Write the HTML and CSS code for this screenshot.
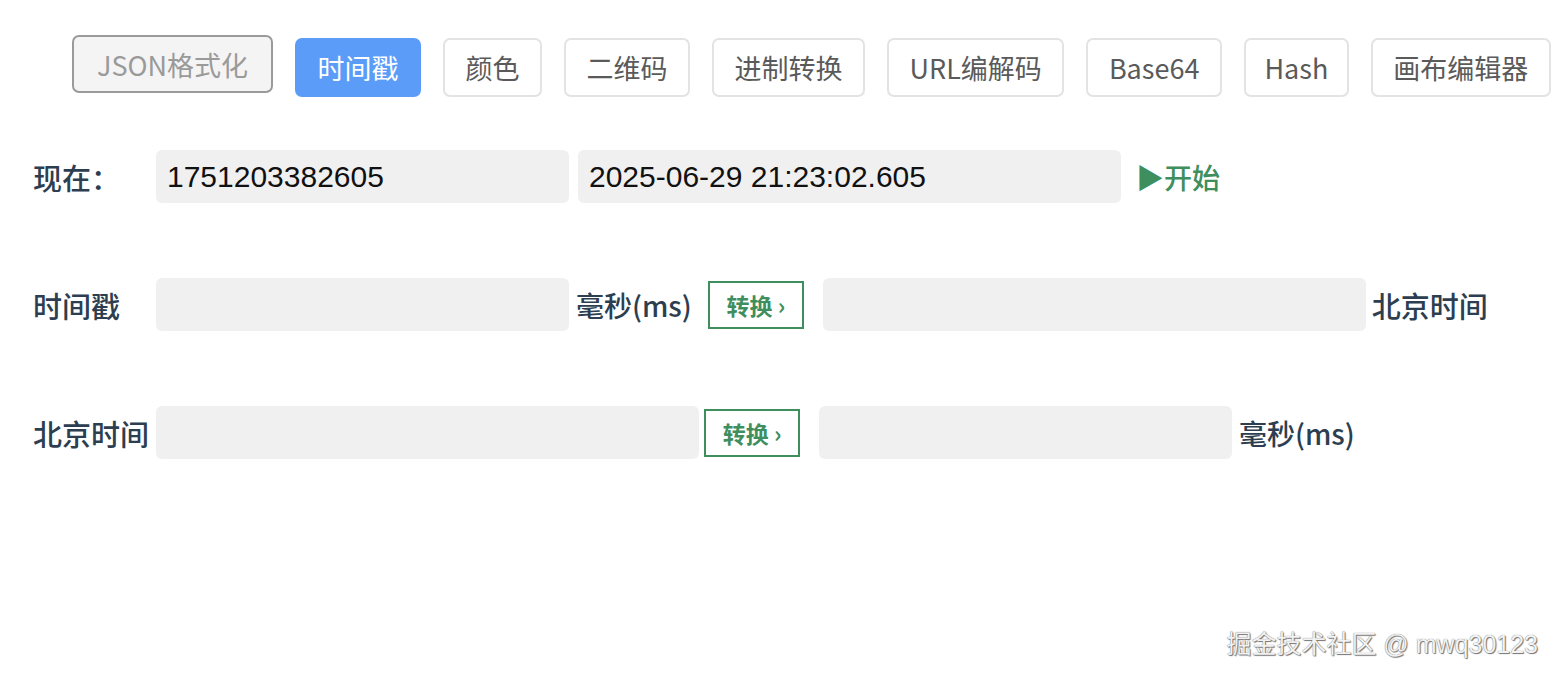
FILE: index.html
```html
<!DOCTYPE html>
<html lang="zh-CN">
<head>
<meta charset="utf-8">
<title>时间戳</title>
<link rel="stylesheet" href="styles.css">
</head>
<body>
<div class="app">
  <nav class="tabs">
    <button class="tab tab-disabled">JSON格式化</button>
    <button class="tab tab-active">时间戳</button>
    <button class="tab">颜色</button>
    <button class="tab">二维码</button>
    <button class="tab">进制转换</button>
    <button class="tab">URL编解码</button>
    <button class="tab">Base64</button>
    <button class="tab tab-narrow">Hash</button>
    <button class="tab">画布编辑器</button>
  </nav>

  <main class="rows">
    <div class="row">
      <span class="label">现在：</span>
      <div class="field field-sm">1751203382605</div>
      <div class="field field-lg gap-9">2025-06-29 21:23:02.605</div>
      <span class="start">▶开始</span>
    </div>

    <div class="row">
      <span class="label">时间戳</span>
      <div class="field field-sm"></div>
      <span class="unit gap-7">毫秒(ms)</span>
      <button class="convert gap-16">转换 ›</button>
      <div class="field field-lg gap-19"></div>
      <span class="unit unit-cjk gap-6">北京时间</span>
    </div>

    <div class="row">
      <span class="label">北京时间</span>
      <div class="field field-lg"></div>
      <button class="convert gap-5">转换 ›</button>
      <div class="field field-sm gap-19"></div>
      <span class="unit gap-7">毫秒(ms)</span>
    </div>
  </main>

  <div class="watermark">掘金技术社区 @ mwq30123</div>
</div>
</body>
</html>
```

FILE: styles.css
```css
* { box-sizing: border-box; }

html, body {
  margin: 0;
  padding: 0;
  background: #ffffff;
}

body {
  font-family: "Noto Sans CJK SC", "Noto Sans", sans-serif;
  color: #2c3e50;
}

.app {
  position: relative;
  width: 1560px;
  height: 682px;
  overflow: hidden;
}

.tabs {
  display: flex;
  align-items: flex-start;
  gap: 22px;
  padding: 38px 0 0 72px;
}

.tab {
  height: 59px;
  padding: 0 20.5px;
  border: 2px solid #e3e3e3;
  border-radius: 7px;
  background: #ffffff;
  color: #5a5a5a;
  font-family: "Noto Sans CJK SC", sans-serif;
  font-size: 27px;
  line-height: 1;
  cursor: pointer;
}

.tab-narrow { padding: 0 18.5px; }

.tab-active {
  background: #5a9cf8;
  border-color: #5a9cf8;
  color: #ffffff;
}

.tab-disabled {
  margin-top: -3px;
  height: 58px;
  padding: 0 23px;
  background: #f4f4f4;
  border-color: #9a9a9a;
  color: #9a9a9a;
}

.rows {
  display: flex;
  flex-direction: column;
  gap: 75px;
  padding: 53px 0 0 33px;
}

.row {
  display: flex;
  align-items: center;
  height: 53px;
}

.label {
  width: 123px;
  flex: none;
  font-size: 29px;
  font-weight: 500;
  white-space: nowrap;
}

.unit {
  flex: none;
  font-size: 28px;
  font-weight: 500;
  white-space: nowrap;
}

.unit-cjk { font-size: 29px; }

.field {
  height: 53px;
  flex: none;
  background: #f0f0f0;
  border-radius: 6px;
  padding: 0 11px;
  display: flex;
  align-items: center;
  font-family: "Liberation Sans", Arial, sans-serif;
  font-size: 30px;
  color: #111111;
}

.field-sm { width: 413px; }
.field-lg { width: 543px; }

.start {
  margin-left: 15px;
  color: #3e8e5e;
  font-size: 28px;
  font-weight: 500;
  white-space: nowrap;
}

.convert {
  flex: none;
  width: 96px;
  height: 48px;
  padding: 0;
  border: 2px solid #3e8e5e;
  border-radius: 0;
  background: #ffffff;
  color: #3e8e5e;
  font-family: "Noto Sans CJK SC", sans-serif;
  font-size: 23px;
  font-weight: 700;
  cursor: pointer;
}

.gap-5 { margin-left: 5px; }
.gap-6 { margin-left: 6px; }
.gap-7 { margin-left: 7px; }
.gap-9 { margin-left: 9px; }
.gap-16 { margin-left: 16px; }
.gap-19 { margin-left: 19px; }

.watermark {
  position: absolute;
  right: 22px;
  bottom: 22px;
  font-family: "Liberation Sans", "Noto Sans CJK SC", sans-serif;
  font-size: 25px;
  color: #f2f2f2;
  text-shadow: 0 0 1px #555555, 1px 1px 1px #777777;
  white-space: nowrap;
}
```
